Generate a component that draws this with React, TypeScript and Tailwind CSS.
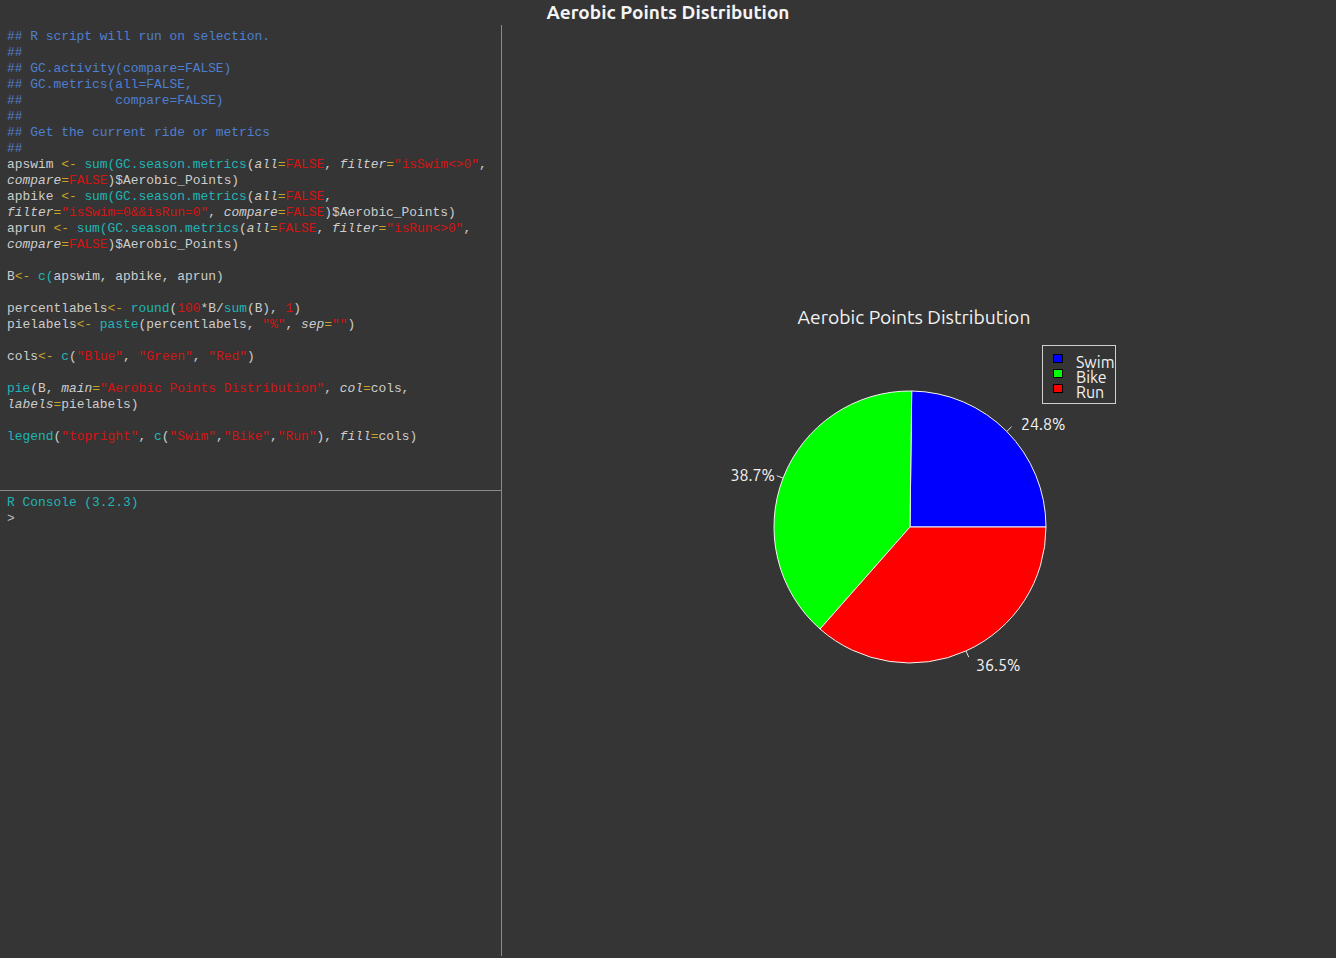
type Seg = [string, string?];

const C = {
  cm: "text-[#4f7fd0]",
  tx: "text-[#cdcdcd]",
  op: "text-[#c9a227]",
  fn: "text-[#1fb5b5]",
  st: "text-[#d41414]",
  ar: "text-[#cdcdcd] italic",
};

const lines: Seg[][] = [
  [["## R script will run on selection.", C.cm]],
  [["##", C.cm]],
  [["## GC.activity(compare=FALSE)", C.cm]],
  [["## GC.metrics(all=FALSE,", C.cm]],
  [["##            compare=FALSE)", C.cm]],
  [["##", C.cm]],
  [["## Get the current ride or metrics", C.cm]],
  [["##", C.cm]],
  [
    ["apswim ", C.tx], ["<-", C.op], [" sum(GC.season.metrics", C.fn], ["(", C.tx], ["all", C.ar], ["=", C.op],
    ["FALSE", C.st], [", ", C.tx], ["filter", C.ar], ["=", C.op], ['"isSwim<>0"', C.st], [",", C.tx],
  ],
  [["compare", C.ar], ["=", C.op], ["FALSE", C.st], [")$Aerobic_Points)", C.tx]],
  [
    ["apbike ", C.tx], ["<-", C.op], [" sum(GC.season.metrics", C.fn], ["(", C.tx], ["all", C.ar], ["=", C.op],
    ["FALSE", C.st], [",", C.tx],
  ],
  [
    ["filter", C.ar], ["=", C.op], ['"isSwim=0&&isRun=0"', C.st], [", ", C.tx], ["compare", C.ar], ["=", C.op],
    ["FALSE", C.st], [")$Aerobic_Points)", C.tx],
  ],
  [
    ["aprun ", C.tx], ["<-", C.op], [" sum(GC.season.metrics", C.fn], ["(", C.tx], ["all", C.ar], ["=", C.op],
    ["FALSE", C.st], [", ", C.tx], ["filter", C.ar], ["=", C.op], ['"isRun<>0"', C.st], [",", C.tx],
  ],
  [["compare", C.ar], ["=", C.op], ["FALSE", C.st], [")$Aerobic_Points)", C.tx]],
  [],
  [["B", C.tx], ["<-", C.op], [" c(", C.fn], ["apswim, apbike, aprun)", C.tx]],
  [],
  [
    ["percentlabels", C.tx], ["<-", C.op], [" round", C.fn], ["(", C.tx], ["100", C.st], ["*B/", C.tx],
    ["sum", C.fn], ["(B), ", C.tx], ["1", C.st], [")", C.tx],
  ],
  [
    ["pielabels", C.tx], ["<-", C.op], [" paste", C.fn], ["(percentlabels, ", C.tx], ['"%"', C.st], [", ", C.tx],
    ["sep", C.ar], ["=", C.op], ['""', C.st], [")", C.tx],
  ],
  [],
  [
    ["cols", C.tx], ["<-", C.op], [" c", C.fn], ["(", C.tx], ['"Blue"', C.st], [", ", C.tx], ['"Green"', C.st],
    [", ", C.tx], ['"Red"', C.st], [")", C.tx],
  ],
  [],
  [
    ["pie", C.fn], ["(B, ", C.tx], ["main", C.ar], ["=", C.op], ['"Aerobic Points Distribution"', C.st],
    [", ", C.tx], ["col", C.ar], ["=", C.op], ["cols,", C.tx],
  ],
  [["labels", C.ar], ["=", C.op], ["pielabels)", C.tx]],
  [],
  [
    ["legend", C.fn], ["(", C.tx], ['"topright"', C.st], [", ", C.tx], ["c", C.fn], ["(", C.tx], ['"Swim"', C.st],
    [",", C.tx], ['"Bike"', C.st], [",", C.tx], ['"Run"', C.st], ["), ", C.tx], ["fill", C.ar], ["=", C.op],
    ["cols)", C.tx],
  ],
];

const slices = [
  { pct: 24.8, color: "#0000ff" },
  { pct: 38.7, color: "#00ff00" },
  { pct: 36.5, color: "#ff0000" },
];

function PieChart() {
  const cx = 408;
  const cy = 502;
  const r = 136;
  const pt = (deg: number, k = 1) => {
    const a = (deg * Math.PI) / 180;
    return [cx + r * k * Math.cos(a), cy - r * k * Math.sin(a)];
  };
  let start = 0;
  const parts = slices.map((s) => {
    const sweep = (s.pct / 100) * 360;
    const end = start + sweep;
    const [x1, y1] = pt(start);
    const [x2, y2] = pt(end);
    const large = sweep > 180 ? 1 : 0;
    const mid = start + sweep / 2;
    const d = `M${cx},${cy} L${x1},${y1} A${r},${r} 0 ${large} 0 ${x2},${y2} Z`;
    start = end;
    return { ...s, d, mid };
  });
  const font = "Ubuntu, 'Noto Sans', 'Open Sans', sans-serif";
  return (
    <svg width="834" height="933" className="block">
      <text x="412" y="299" textAnchor="middle" fill="#f2f2f2" fontSize="19.3" fontFamily={font}>
        Aerobic Points Distribution
      </text>
      {parts.map((p) => (
        <path key={p.color} d={p.d} fill={p.color} stroke="#f4f4f4" strokeWidth="1" />
      ))}
      {parts.map((p) => {
        const [ax, ay] = pt(p.mid, 1);
        const [bx, by] = pt(p.mid, 1.05);
        return <line key={"t" + p.color} x1={ax} y1={ay} x2={bx} y2={by} stroke="#e0e0e0" strokeWidth="1" />;
      })}
      <text x="519" y="405" fill="#f2f2f2" fontSize="16" fontFamily={font}>24.8%</text>
      <text x="273" y="456" textAnchor="end" fill="#f2f2f2" fontSize="16" fontFamily={font}>38.7%</text>
      <text x="474" y="646" fill="#f2f2f2" fontSize="16" fontFamily={font}>36.5%</text>
      <rect x="540.5" y="320.5" width="73" height="58" fill="none" stroke="#d0d0d0" strokeWidth="1" />
      {[
        ["#0000ff", "Swim", 329],
        ["#00ff00", "Bike", 344],
        ["#ff0000", "Run", 359],
      ].map(([c, t, y]) => (
        <g key={t as string}>
          <rect x="551.5" y={(y as number) + 0.5} width="9" height="8" fill={c as string} stroke="#000" strokeWidth="1" />
          <text x="574" y={(y as number) + 14} fill="#f2f2f2" fontSize="16" fontFamily={font}>
            {t}
          </text>
        </g>
      ))}
    </svg>
  );
}

export default function App() {
  return (
    <div className="w-[1336px] h-[958px] bg-[#353535] overflow-hidden flex flex-col">
      <div className="h-[25px] flex items-center justify-center text-[19px] font-bold text-[#f4f4f4] font-['Ubuntu','Noto_Sans',sans-serif] leading-none">
        Aerobic Points Distribution
      </div>
      <div className="flex flex-1 min-h-0">
        <div className="w-[501px] h-[931px] flex flex-col font-['Liberation_Mono','Courier_New',monospace] text-[12.9px] leading-[16px]">
          <div className="h-[465px] pt-[4px] pl-[7px]">
            {lines.map((segs, i) => (
              <div key={i} className="h-[16px] whitespace-pre">
                {segs.map(([t, c], j) => (
                  <span key={j} className={c}>
                    {t}
                  </span>
                ))}
              </div>
            ))}
          </div>
          <div className="border-t border-[#8a8a8a] pt-[4px] pl-[7px]">
            <div className="h-[16px] whitespace-pre text-[#1fb5b5]">R Console (3.2.3)</div>
            <div className="h-[16px] text-[#bdbdbd]">&gt;</div>
          </div>
        </div>
        <div className="w-px h-[931px] bg-[#8a8a8a]" />
        <div className="flex-1">
          <PieChart />
        </div>
      </div>
    </div>
  );
}
